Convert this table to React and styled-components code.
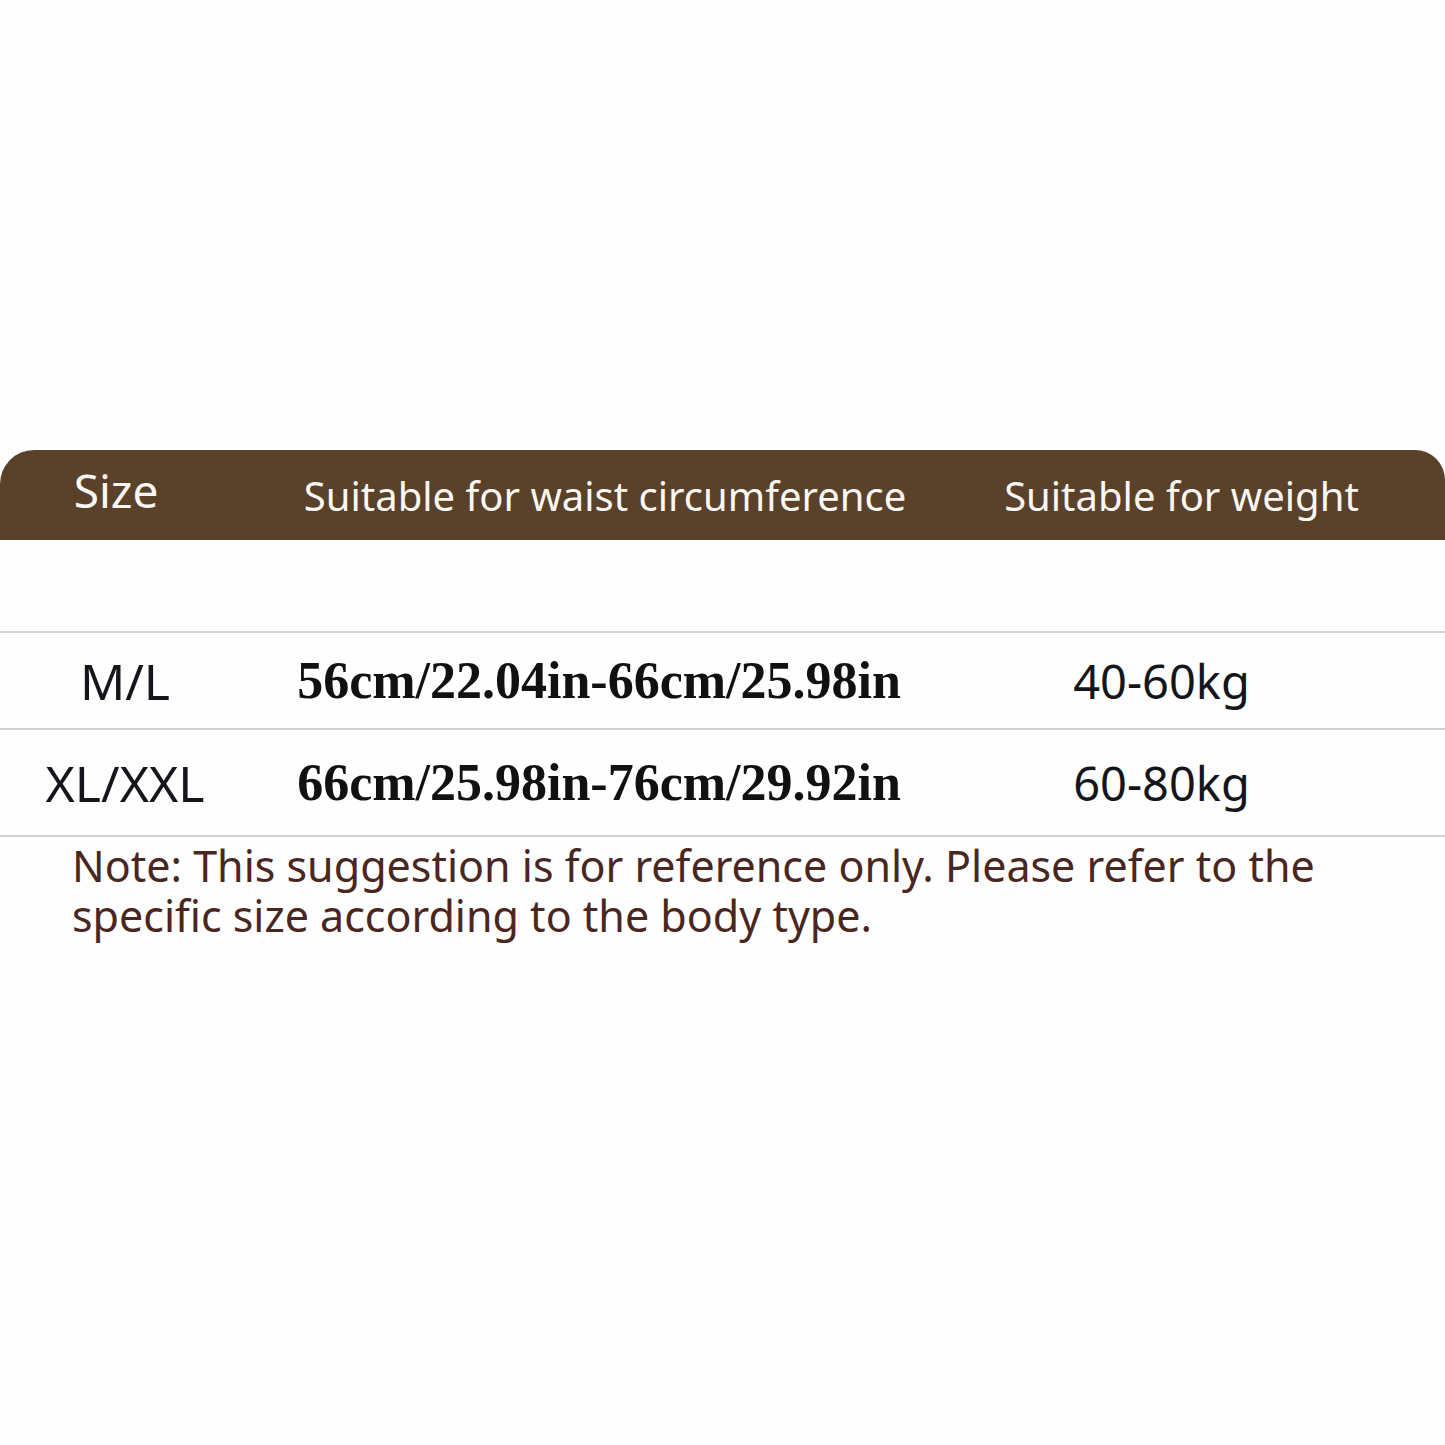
import React from 'react';
import styled, { createGlobalStyle } from 'styled-components';

const Global = createGlobalStyle`
  html, body { margin: 0; padding: 0; background: #fff; }
  body { width: 1445px; height: 1445px; overflow: hidden; }
`;

const Page = styled.div`
  width: 1445px;
  height: 1445px;
  padding-top: 450px;
  box-sizing: border-box;
  background: #fefefe;
`;

const Header = styled.div`
  display: grid;
  grid-template-columns: 240px 730px 1fr;
  align-items: center;
  height: 90px;
  background: #5a4129;
  border-radius: 34px 30px 0 0;
  color: #fbf8f4;
  font-family: 'Noto Sans', sans-serif;
  font-size: 40px;
`;

const HeadCell = styled.div`
  text-align: center;
  font-size: ${p => p.$size || 40}px;
  padding-bottom: ${p => p.$lift || 0}px;
  padding-right: ${p => p.$shift || 0}px;
`;

const Spacer = styled.div`
  height: 91px;
  border-bottom: 2px solid #d4d4d4;
`;

const Row = styled.div`
  display: grid;
  grid-template-columns: 250px 710px 1fr;
  align-items: center;
  height: ${p => p.$h}px;
  border-bottom: 2px solid #d0d0d0;
`;

const SizeCell = styled.div`
  text-align: center;
  font-family: 'Noto Sans', sans-serif;
  font-size: 50px;
  color: #14161c;
`;

const WaistCell = styled.div`
  text-align: center;
  padding-right: 12px;
  font-family: 'Liberation Serif', serif;
  font-weight: 700;
  font-size: 52px;
  color: #111;
`;

const WeightCell = styled.div`
  text-align: center;
  padding-right: 82px;
  font-family: 'Noto Sans', sans-serif;
  font-size: 47px;
  color: #14161c;
`;

const Note = styled.p`
  margin: 4px 0 0 72px;
  width: 1330px;
  font-family: 'Noto Sans', sans-serif;
  font-size: 43px;
  line-height: 50px;
  color: #4a2621;
`;

const rows = [
  { size: 'M/L', waist: '56cm/22.04in-66cm/25.98in', weight: '40-60kg', h: 95 },
  { size: 'XL/XXL', waist: '66cm/25.98in-76cm/29.92in', weight: '60-80kg', h: 105 },
];

export default function App() {
  return (
    <Page>
      <Global />
      <Header>
        <HeadCell $size={46} $lift={10} $shift={8}>Size</HeadCell>
        <HeadCell>Suitable for waist circumference</HeadCell>
        <HeadCell $shift={52}>Suitable for weight</HeadCell>
      </Header>
      <Spacer />
      {rows.map(r => (
        <Row key={r.size} $h={r.h}>
          <SizeCell>{r.size}</SizeCell>
          <WaistCell>{r.waist}</WaistCell>
          <WeightCell>{r.weight}</WeightCell>
        </Row>
      ))}
      <Note>
        Note: This suggestion is for reference only. Please refer to the specific size according to the body type.
      </Note>
    </Page>
  );
}
